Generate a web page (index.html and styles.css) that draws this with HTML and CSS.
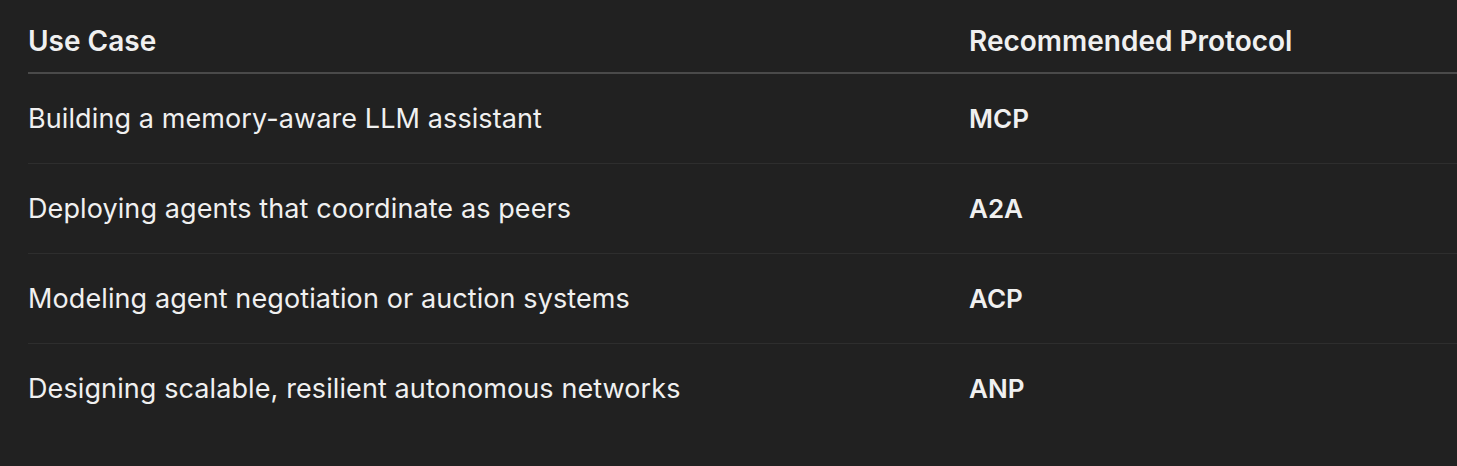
FILE: index.html
```html
<!DOCTYPE html>
<html>
<head>
<meta charset="utf-8">
<link rel="stylesheet" href="styles.css">
</head>
<body>
<div class="wrap">
<table class="tbl">
<thead>
<tr><th class="c1">Use Case</th><th class="c2">Recommended Protocol</th></tr>
</thead>
<tbody>
<tr><td class="c1">Building a memory-aware LLM assistant</td><td class="c2 proto">MCP</td></tr>
<tr><td class="c1">Deploying agents that coordinate as peers</td><td class="c2 proto">A2A</td></tr>
<tr><td class="c1">Modeling agent negotiation or auction systems</td><td class="c2 proto">ACP</td></tr>
<tr><td class="c1">Designing scalable, resilient autonomous networks</td><td class="c2 proto">ANP</td></tr>
</tbody>
</table>
</div>
</body>
</html>
```
FILE: styles.css
```css
html, body {
  margin: 0;
  padding: 0;
  background: #212121;
}
body {
  font-family: Inter, "Noto Sans", sans-serif;
  color: #f0f0f0;
  overflow: hidden;
}
.wrap {
  padding: 9px 0 0 28px;
}
.tbl {
  border-collapse: collapse;
  width: 1500px;
  table-layout: fixed;
  font-size: 27px;
  line-height: 32px;
  letter-spacing: 0.1px;
}
.tbl th {
  text-align: left;
  font-size: 28px;
  font-weight: 600;
  letter-spacing: 0;
  height: 63px;
  padding: 0;
  vertical-align: middle;
  border-bottom: 2px solid #4a4a4a;
}
.tbl td {
  height: 89px;
  padding: 0;
  vertical-align: middle;
  border-bottom: 1px solid #2e2e2e;
}
.tbl tbody tr:last-child td {
  border-bottom: none;
}
.c1 {
  width: 941px;
}
.proto {
  font-size: 26px;
  font-weight: 600;
  letter-spacing: 0;
}
```
